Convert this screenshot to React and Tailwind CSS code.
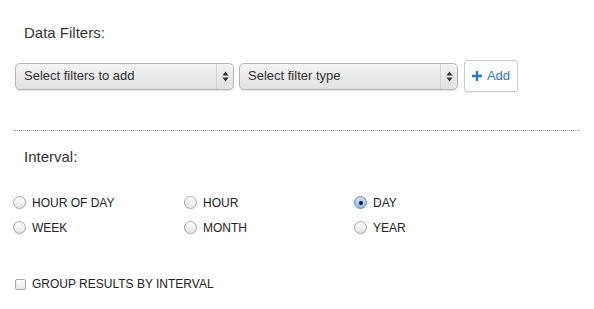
import React from "react";

function Arrows() {
  return (
    <svg width="7" height="11" viewBox="0 0 7 11" className="block">
      <path d="M3.5 0.5 L6.5 4.5 L0.5 4.5 Z" fill="#333" />
      <path d="M3.5 10.5 L6.5 6.5 L0.5 6.5 Z" fill="#333" />
    </svg>
  );
}

function FakeSelect({ label }) {
  return (
    <div className="flex h-[27px] w-[219px] items-stretch rounded-[5px] border border-[#b4b4b4] bg-gradient-to-b from-[#f4f4f4] via-[#e9e9e9] to-[#e2e2e2] shadow-[0_1px_1px_rgba(0,0,0,0.12)]">
      <div className="flex flex-1 items-center pl-[8px] text-[13px] text-[#333]">{label}</div>
      <div className="flex w-[17px] items-center justify-center border-l border-[#cfcfcf]">
        <Arrows />
      </div>
    </div>
  );
}

function Radio({ label, checked }) {
  return (
    <label className="flex h-[25px] items-center gap-[6px]">
      {checked ? (
        <span className="flex h-[13px] w-[13px] items-center justify-center rounded-full border border-[#5d8fc9] bg-gradient-to-b from-[#cfe3f8] to-[#8db8e8]">
          <span className="h-[4px] w-[4px] rounded-full bg-[#111]" />
        </span>
      ) : (
        <span className="h-[13px] w-[13px] rounded-full border border-[#a8a8a8] bg-gradient-to-b from-[#ffffff] to-[#e4e4e4] shadow-[0_1px_1px_rgba(0,0,0,0.08)]" />
      )}
      <span className="text-[12px] text-[#222]">{label}</span>
    </label>
  );
}

export default function App() {
  const intervals = [
    { label: "HOUR OF DAY" },
    { label: "HOUR" },
    { label: "DAY", checked: true },
    { label: "WEEK" },
    { label: "MONTH" },
    { label: "YEAR" },
  ];

  return (
    <div className="h-[309px] w-[594px] overflow-hidden bg-white font-['Liberation_Sans',Arial,sans-serif] text-[#333]">
      <h3 className="ml-[24px] pt-[24px] text-[15px] leading-[18px] text-[#333]">Data Filters:</h3>

      <div className="ml-[15px] mt-[18px] flex h-[32px] items-center">
        <FakeSelect label="Select filters to add" />
        <div className="ml-[5px]">
          <FakeSelect label="Select filter type" />
        </div>
        <button className="ml-[6px] flex h-[32px] w-[54px] items-center justify-center gap-[5px] rounded-[3px] border border-[#cccccc] bg-white text-[13px] text-[#2a7ac0] shadow-[0_1px_1px_rgba(0,0,0,0.06)]">
          <svg width="10" height="10" viewBox="0 0 10 10">
            <path d="M3.8 0 H6.2 V3.8 H10 V6.2 H6.2 V10 H3.8 V6.2 H0 V3.8 H3.8 Z" fill="#2a7ac0" />
          </svg>
          Add
        </button>
      </div>

      <div className="ml-[14px] mr-[14px] mt-[38px] border-t border-dotted border-[#999]" />

      <h3 className="ml-[24px] mt-[17px] text-[15px] leading-[18px] text-[#333]">Interval:</h3>

      <div className="ml-[13px] mt-[24px] grid w-[510px] grid-cols-[171px_170px_170px]">
        {intervals.map((it) => (
          <Radio key={it.label} label={it.label} checked={it.checked} />
        ))}
      </div>

      <label className="ml-[15px] mt-[34px] flex h-[20px] items-center gap-[6px]">
        <span className="h-[11px] w-[11px] rounded-[2px] border border-[#a8a8a8] bg-gradient-to-b from-[#ffffff] to-[#e4e4e4]" />
        <span className="text-[12px] text-[#222]">GROUP RESULTS BY INTERVAL</span>
      </label>
    </div>
  );
}
